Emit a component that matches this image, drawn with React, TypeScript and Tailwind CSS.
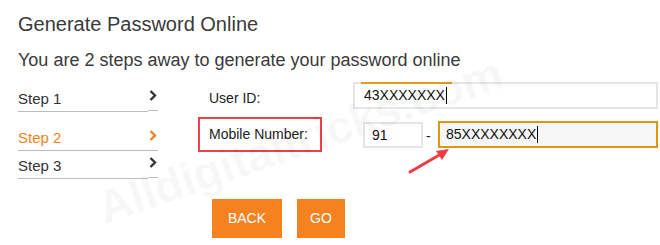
import React from "react";

function Chevron({ color }: { color: string }) {
  return (
    <svg width="8" height="11" viewBox="0 0 8 11" fill="none">
      <path d="M1.5 1 L6 5.5 L1.5 10" stroke={color} strokeWidth="2.4" />
    </svg>
  );
}

function StepRow({ label, active, dropChevron }: { label: string; active?: boolean; dropChevron?: boolean }) {
  const color = active ? "#f58220" : "#333333";
  return (
    <div className="flex h-[28px] items-end">
      <div
        className={`flex h-full flex-1 items-center border-b border-[#bdbdbd] pt-[4px] text-[15px] ${
          active ? "text-[#f58220]" : "text-[#333333]"
        }`}
      >
        {label}
      </div>
      <div
        className={`flex h-full w-[10px] items-center justify-start border-b border-[#bdbdbd] ${
          dropChevron ? "mb-[1px] -mt-[1px] pb-[1px]" : ""
        }`}
      >
        <div className="-mt-[2px] ml-[1px]">
          <Chevron color={color} />
        </div>
      </div>
    </div>
  );
}

export default function App() {
  return (
    <div
      className="relative h-[245px] w-[660px] overflow-hidden bg-white pl-[18px]"
      style={{ fontFamily: '"Liberation Sans", Arial, sans-serif' }}
    >
      <h1 className="pt-[12px] text-[20px] leading-[24px] text-[#3a3a3a]">Generate Password Online</h1>
      <p className="mt-[13px] text-[18px] leading-[22px] text-[#3a3a3a]">
        You are 2 steps away to generate your password online
      </p>

      <div className="mt-[11px] flex">
        {/* Steps */}
        <div className="w-[140px] pt-[2px]">
          <StepRow label="Step 1" dropChevron />
          <div className="h-[11px]" />
          <StepRow label="Step 2" active />
          <StepRow label="Step 3" dropChevron />
        </div>

        {/* Form */}
        <div className="ml-[40px] flex flex-col">
          <div className="flex items-center">
            <div className="w-[155px] pl-[11px] pt-[5px] text-[14px] text-[#222]">User ID:</div>
            <div className="relative flex h-[27px] w-[305px] items-center border-2 border-[#e6e6e6] pl-[9px] text-[14px] text-[#111]">
              <span className="absolute -top-[2px] left-[6px] h-[2px] w-[91px] bg-[#e59a1c]" />
              43XXXXXXX
              <span className="ml-[1px] h-[17px] w-[1px] bg-black" />
            </div>
          </div>

          <div className="mt-[8px] flex items-start">
            <div className="flex h-[35px] w-[124px] items-center border-2 border-[#ef3f4a] pl-[9px] text-[14px] text-[#222]">
              Mobile Number:
            </div>
            <div className="ml-[41px] mt-[5px] flex h-[26px] w-[60px] items-center border-2 border-[#e6e6e6] pl-[7px] text-[14px] text-[#111]">
              91
            </div>
            <div className="mt-[9px] w-[15px] pl-[3px] text-[14px] text-[#222]">-</div>
            <div className="mt-[4px] flex h-[27px] w-[220px] items-center border-2 border-[#e39512] bg-[#f6f6f6] pl-[6px] text-[14px] text-[#111]">
              85XXXXXXXX
              <span className="ml-[1px] h-[17px] w-[1px] bg-black" />
            </div>
          </div>

          <div className="ml-[14px] mt-[47px] flex gap-[15px]">
            <button className="h-[39px] w-[70px] bg-[#f5821f] text-[14px] text-white">BACK</button>
            <button className="h-[39px] w-[48px] bg-[#f5821f] text-[14px] text-white">GO</button>
          </div>
        </div>
      </div>

      {/* Watermark */}
      <div className="pointer-events-none absolute left-[88px] top-[106px] origin-center -rotate-[19deg] whitespace-nowrap text-[46px] font-bold text-black/[0.045]">
        Alldigitaltricks.com
      </div>

      {/* Red arrow */}
      <svg className="pointer-events-none absolute left-0 top-0" width="660" height="245">
        <line x1="410" y1="172" x2="441" y2="154" stroke="#ee3d44" strokeWidth="3" strokeLinecap="round" />
        <polygon points="449,149 436,151 442,160" fill="#ee3d44" />
      </svg>
    </div>
  );
}
